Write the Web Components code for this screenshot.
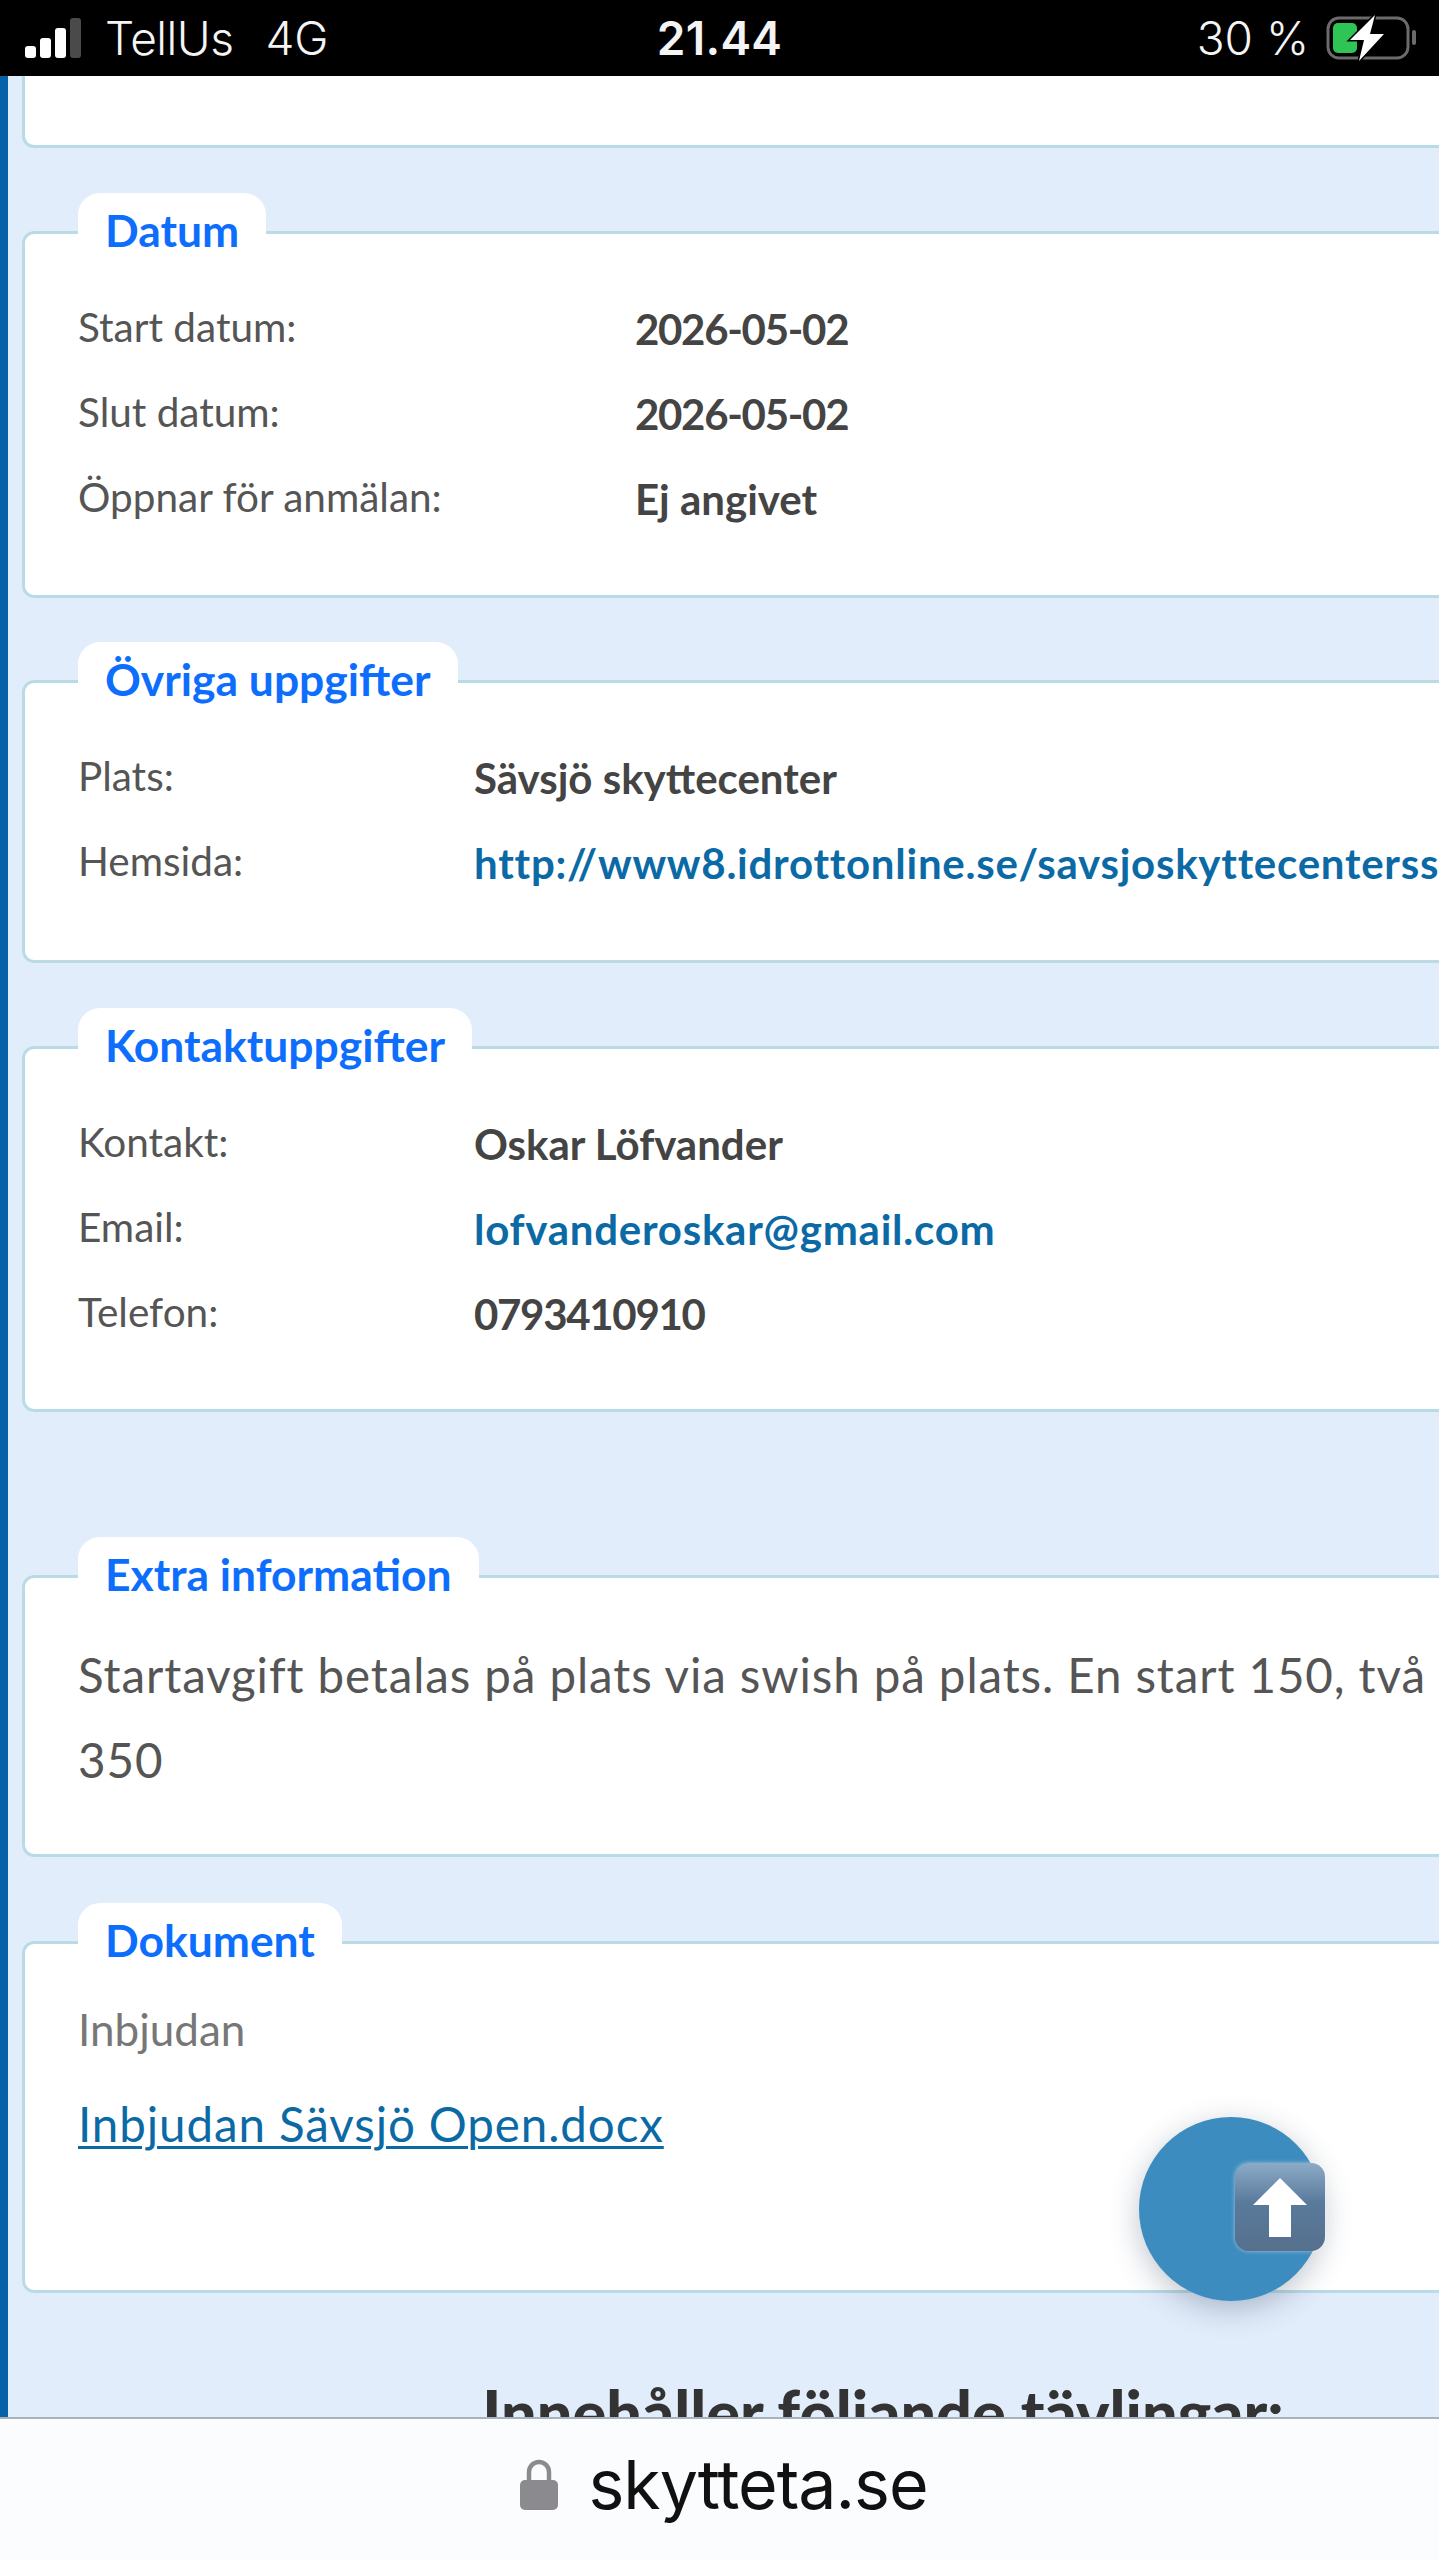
<!DOCTYPE html>
<html lang="sv">
<head>
<meta charset="utf-8">
<title>skytteta.se</title>
<style>
  html, body { margin: 0; padding: 0; height: 2560px; overflow: hidden; background: #e2edfb; }
  body { font-family: "Lato", "Liberation Sans", sans-serif; }
</style>
</head>
<body>
<phone-shell>
  <status-bar slot="top"></status-bar>

  <stub-card style="margin-bottom:45px"></stub-card>

  <info-card legend="Datum" value-col="557" bottom="59" style="margin-bottom:44px">
    <info-row label="Start datum:"><span style="letter-spacing:-1.3px">2026-05-02</span></info-row>
    <info-row label="Slut datum:"><span style="letter-spacing:-1.3px">2026-05-02</span></info-row>
    <info-row label="Öppnar för anmälan:">Ej angivet</info-row>
  </info-card>

  <info-card legend="Övriga uppgifter" value-col="396" bottom="60" style="margin-bottom:45px">
    <info-row label="Plats:">Sävsjö skyttecenter</info-row>
    <info-row label="Hemsida:"><data-link>http://www8.idrottonline.se/savsjoskyttecenterssskytte</data-link></info-row>
  </info-card>

  <info-card legend="Kontaktuppgifter" value-col="396" bottom="58" style="margin-bottom:125px">
    <info-row label="Kontakt:">Oskar Löfvander</info-row>
    <info-row label="Email:"><data-link>lofvanderoskar@gmail.com</data-link></info-row>
    <info-row label="Telefon:"><span style="letter-spacing:-1.3px">0793410910</span></info-row>
  </info-card>

  <info-card legend="Extra information" bottom="52" style="margin-bottom:46px">
    <free-text>Startavgift betalas på plats via swish på plats. En start 150, två 250, tre<br>350</free-text>
  </info-card>

  <info-card legend="Dokument" bottom="136" style="margin-bottom:79px">
    <doc-entry title-text="Inbjudan" file="Inbjudan Sävsjö Open.docx"></doc-entry>
  </info-card>

  <section-heading>Innehåller följande tävlingar:</section-heading>

  <url-bar slot="bottom" host-name="skytteta.se"></url-bar>
  <scroll-top slot="over"></scroll-top>
</phone-shell>

<script>
(function() {
  function define(name, css, html, setup) {
    const template = document.createElement('template');
    template.innerHTML = `<style>${css}</style>${html}`;
    class El extends HTMLElement {
      constructor() {
        super();
        this.attachShadow({ mode: 'open' });
        this.shadowRoot.appendChild(template.content.cloneNode(true));
      }
      connectedCallback() {
        if (setup) setup(this, this.shadowRoot);
      }
    }
    customElements.define(name, El);
  }

  define('phone-shell', `
    :host { display: flex; flex-direction: column; position: relative; width: 1439px; height: 2560px; overflow: hidden; background: #e2edfb; }
    .middle { flex: 1; min-height: 0; overflow: hidden; padding-left: 22px; position: relative; }
    .strip { position: absolute; left: 0; top: 0; bottom: 0; width: 8px; background: #0562a6; }
  `, `
    <slot name="top"></slot>
    <div class="middle"><div class="strip"></div><slot></slot></div>
    <slot name="bottom"></slot>
    <slot name="over"></slot>
  `);

  define('status-bar', `
    :host { display: flex; align-items: center; height: 76px; box-sizing: border-box; background: #000; color: #f4f4f4;
      font: 400 46px/76px "Inter", "Liberation Sans", sans-serif; position: relative; padding: 0 21px 0 25px; }
    .signal { display: flex; align-items: flex-end; gap: 4px; height: 40px; width: 66px; }
    .signal i { display: block; width: 11px; border-radius: 3px; background: #fff; }
    .carrier { margin-left: 14px; font-weight: 300; letter-spacing: -0.5px; }
    .net { margin-left: 32px; font-weight: 300; }
    .time { position: absolute; left: 0; right: 0; top: 0; text-align: center; font-weight: 600; letter-spacing: .3px; pointer-events: none; }
    .right { margin-left: auto; display: flex; align-items: center; gap: 17px; }
    .pct { font-weight: 300; }
    svg { display: block; }
  `, `
    <div class="signal">
      <i style="height:12px"></i><i style="height:20px"></i><i style="height:30px"></i><i style="height:40px;background:#4a4a4a"></i>
    </div>
    <span class="carrier">TellUs</span><span class="net">4G</span>
    <span class="time">21.44</span>
    <div class="right">
      <span class="pct">30 %</span>
      <svg width="92" height="46" viewBox="0 0 92 46">
        <rect x="2" y="3" width="80" height="40" rx="11" fill="none" stroke="#6b6b6b" stroke-width="3"/>
        <rect x="86" y="15" width="4" height="15" rx="2" fill="#6b6b6b"/>
        <rect x="7" y="8" width="24" height="30" rx="5" fill="#2fc456"/>
        <path d="M49 0 L24 25 L38 25 L33 46 L58 19 L44 19 Z" fill="#fff" stroke="#000" stroke-width="3" paint-order="stroke"/>
      </svg>
    </div>
  `);

  define('stub-card', `
    :host { display: block; width: 1600px; height: 72px; box-sizing: border-box; background: #fff; border: 3px solid #b9dbe6; border-top: 0; border-radius: 0 0 12px 12px; }
  `, ``);

  define('info-card', `
    :host { display: block; width: 1600px; }
    fieldset { margin: 0; min-width: 0; box-sizing: border-box; background: #fff; border: 3px solid #b9dbe6; border-radius: 12px; padding: 10px 30px var(--card-bottom, 54px) 53px; }
    legend { background: #fff; color: #0d6efd; font: 700 44.4px/74px "Lato", "Liberation Sans", sans-serif; padding: 0 27px 4px; border-radius: 22px; }
  `, `
    <fieldset><legend></legend><slot></slot></fieldset>
  `, (el, root) => {
    root.querySelector('legend').textContent = el.getAttribute('legend');
    if (el.hasAttribute('bottom')) el.style.setProperty('--card-bottom', el.getAttribute('bottom') + 'px');
    if (el.hasAttribute('value-col')) el.style.setProperty('--value-col', el.getAttribute('value-col') + 'px');
  });

  define('info-row', `
    :host { display: grid; grid-template-columns: var(--value-col, 396px) 1fr; height: 85px; align-items: center; }
    .label { font: 400 40.5px/85px "Lato", "Liberation Sans", sans-serif; color: #555; }
    .value { font: 700 42px/85px "Lato", "Liberation Sans", sans-serif; color: #444; padding-top: 6px; white-space: nowrap; }
  `, `
    <div class="label"></div><div class="value"><slot></slot></div>
  `, (el, root) => {
    root.querySelector('.label').textContent = el.getAttribute('label');
  });

  define('data-link', `
    :host { display: inline; color: #0b6aa5; font-weight: 700; white-space: nowrap; letter-spacing: .75px; }
  `, `<slot></slot>`);

  define('free-text', `
    :host { display: block; font: 400 47.5px/85px "Lato", "Liberation Sans", sans-serif; letter-spacing: .9px; color: #555; white-space: nowrap; padding-top: 7px; }
  `, `<slot></slot>`);

  define('doc-entry', `
    :host { display: block; font-family: "Lato", "Liberation Sans", sans-serif; }
    .title { font-size: 44px; line-height: 60px; color: #777; margin-top: 8px; }
    a { display: inline-block; margin-top: 35px; font-size: 47.5px; letter-spacing: .9px; line-height: 60px; color: #0b6aa5; text-decoration: underline; text-decoration-thickness: 3px; text-underline-offset: 4px; }
  `, `
    <div class="title"></div><a href="#"></a>
  `, (el, root) => {
    root.querySelector('.title').textContent = el.getAttribute('title-text');
    root.querySelector('a').textContent = el.getAttribute('file');
  });

  define('section-heading', `
    :host { display: block; width: 1722px; text-align: center; font: 900 63px/80px "Lato", "Liberation Sans", sans-serif; color: #333; white-space: nowrap; }
  `, `<slot></slot>`);

  define('url-bar', `
    :host { display: flex; align-items: center; justify-content: center; gap: 30px; height: 143px; box-sizing: border-box; background: #fbfcfe; border-top: 2px solid #a9b2ba; padding: 0 0 11px 9px; position: relative; }
    .name { font: 400 68px/80px "Inter", "Liberation Sans", sans-serif; color: #111; letter-spacing: -1px; }
    svg { display: block; }
  `, `
    <svg width="38" height="52" viewBox="0 0 38 52" aria-hidden="true">
      <path d="M9 24 V14 a10 10 0 0 1 20 0 V24" fill="none" stroke="#8a8a8f" stroke-width="4.5"/>
      <rect x="0" y="22" width="38" height="30" rx="5" fill="#8a8a8f"/>
    </svg>
    <span class="name"></span>
  `, (el, root) => {
    root.querySelector('.name').textContent = el.getAttribute('host-name');
  });

  define('scroll-top', `
    :host { display: block; position: absolute; left: 1139px; top: 2117px; width: 184px; height: 184px; border-radius: 50%; background: #3d8cbf; box-shadow: 0 8px 30px rgba(40, 60, 90, .3); }
    .box { position: absolute; left: 96px; top: 46px; width: 90px; height: 88px; border-radius: 14px; background: linear-gradient(#8cabc7, #5a7a9c 45%, #56708c); box-shadow: 0 0 4px rgba(255,255,255,.5); }
    svg { position: absolute; left: 18px; top: 15px; }
  `, `
    <div class="box">
      <svg width="54" height="60" viewBox="0 0 54 60"><path d="M27 0 L54 27 L38 27 L38 59 L16 59 L16 27 L0 27 Z" fill="#fff"/></svg>
    </div>
  `);
})();
</script>
</body>
</html>
